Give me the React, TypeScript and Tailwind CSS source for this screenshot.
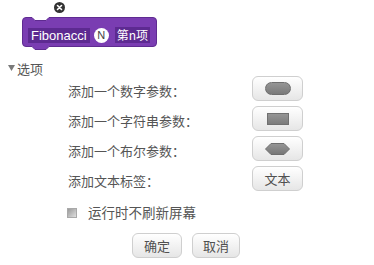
import React from "react";

const font = { fontFamily: '"Noto Sans CJK SC", "Noto Sans", sans-serif' };

function Btn({ children, w }: { children: React.ReactNode; w: string }) {
  return (
    <div
      className={`${w} h-[25px] flex items-center justify-center rounded-[6px] border border-[#cfcfcf] bg-gradient-to-b from-[#ffffff] to-[#e6e6e6] text-[13px] text-[#505050]`}
    >
      {children}
    </div>
  );
}

function Row({ label, children }: { label: string; children: React.ReactNode }) {
  return (
    <div className="flex items-center h-[25px] pl-[68px]">
      <div className="w-[184px] text-[13px] leading-none text-[#555] pt-[3px]">{label}</div>
      <Btn w="w-[51px]">{children}</Btn>
    </div>
  );
}

export default function App() {
  return (
    <div className="w-[374px] h-[265px] bg-white relative overflow-hidden" style={font}>
      {/* block preview */}
      <div className="pt-[17px] pl-[22px]">
        <div className="relative w-[136px] h-[34px]">
          <svg className="absolute left-0 top-0" width="136" height="34" viewBox="0 0 136 34">
            <path
              d="M0.5,4 Q0.5,0.5 4,0.5 L10,0.5 L13,3.5 L24,3.5 L27,0.5 L131,0.5 Q134.5,0.5 134.5,4 L134.5,26 Q134.5,29.5 131,29.5 L27,29.5 L24,32.5 L13,32.5 L10,29.5 L4,29.5 Q0.5,29.5 0.5,26 Z"
              fill="#7a3db2"
              stroke="#5f2b91"
              strokeWidth="1"
            />
          </svg>
          <div className="relative flex items-center pl-[6px] pt-[10px] gap-[4px]">
            <div
              className="h-[15px] px-[3px] bg-[#5d2a91] text-white text-[13px] leading-[15px]"
              style={{ fontFamily: '"Liberation Sans", Arial, sans-serif' }}
            >
              Fibonacci
            </div>
            <div
              className="w-[15px] h-[15px] rounded-full bg-white text-[#444] text-[11px] flex items-center justify-center"
              style={{ fontFamily: '"Liberation Sans", Arial, sans-serif' }}
            >
              N
            </div>
            <div className="ml-[2px] h-[16px] px-[2px] bg-[#5d2a91] text-white text-[12px] leading-[16px]">
              第n项
            </div>
          </div>
          <div className="absolute left-[32px] top-[-15px] w-[11px] h-[11px] rounded-full bg-[#333] flex items-center justify-center">
            <svg width="7" height="7" viewBox="0 0 7 7">
              <path d="M1.5,1.5 L5.5,5.5 M5.5,1.5 L1.5,5.5" stroke="#fff" strokeWidth="1.6" strokeLinecap="round" />
            </svg>
          </div>
        </div>
      </div>

      {/* options header */}
      <div className="flex items-center mt-[10px] pl-[8px] h-[14px] text-[13px] text-[#555]">
        <svg width="7" height="6" viewBox="0 0 7 6" className="mr-[2px]">
          <path d="M0,0 L7,0 L3.5,6 Z" fill="#7a7a7a" />
        </svg>
        <span className="leading-none">选项</span>
      </div>

      <div className="mt-[1px] flex flex-col gap-[5px]">
        <Row label="添加一个数字参数：">
          <div className="w-[26px] h-[13px] rounded-full bg-gradient-to-b from-[#959595] to-[#7a7a7a] border border-[#6e6e6e]" />
        </Row>
        <Row label="添加一个字符串参数：">
          <div className="w-[22px] h-[12px] bg-gradient-to-b from-[#959595] to-[#7c7c7c] border border-[#707070]" />
        </Row>
        <Row label="添加一个布尔参数：">
          <svg width="25" height="12" viewBox="0 0 25 12">
            <defs>
              <linearGradient id="hx" x1="0" y1="0" x2="0" y2="1">
                <stop offset="0" stopColor="#969696" />
                <stop offset="1" stopColor="#767676" />
              </linearGradient>
            </defs>
            <path d="M0.5,6 L6,0.5 L19,0.5 L24.5,6 L19,11.5 L6,11.5 Z" fill="url(#hx)" stroke="#6e6e6e" strokeWidth="1" />
          </svg>
        </Row>
        <Row label="添加文本标签：">文本</Row>
      </div>

      {/* checkbox */}
      <div className="flex items-center mt-[15px] pl-[67px] h-[14px]">
        <div className="w-[10px] h-[10px] border border-[#a9a9a9] bg-gradient-to-br from-[#9a9a9a] to-[#e0e0e0]" />
        <span className="ml-[11px] text-[13.5px] leading-none text-[#555]">运行时不刷新屏幕</span>
      </div>

      {/* footer */}
      <div className="flex mt-[13px] pl-[132px] gap-[10px]">
        <Btn w="w-[50px]">确定</Btn>
        <Btn w="w-[48px]">取消</Btn>
      </div>
    </div>
  );
}
